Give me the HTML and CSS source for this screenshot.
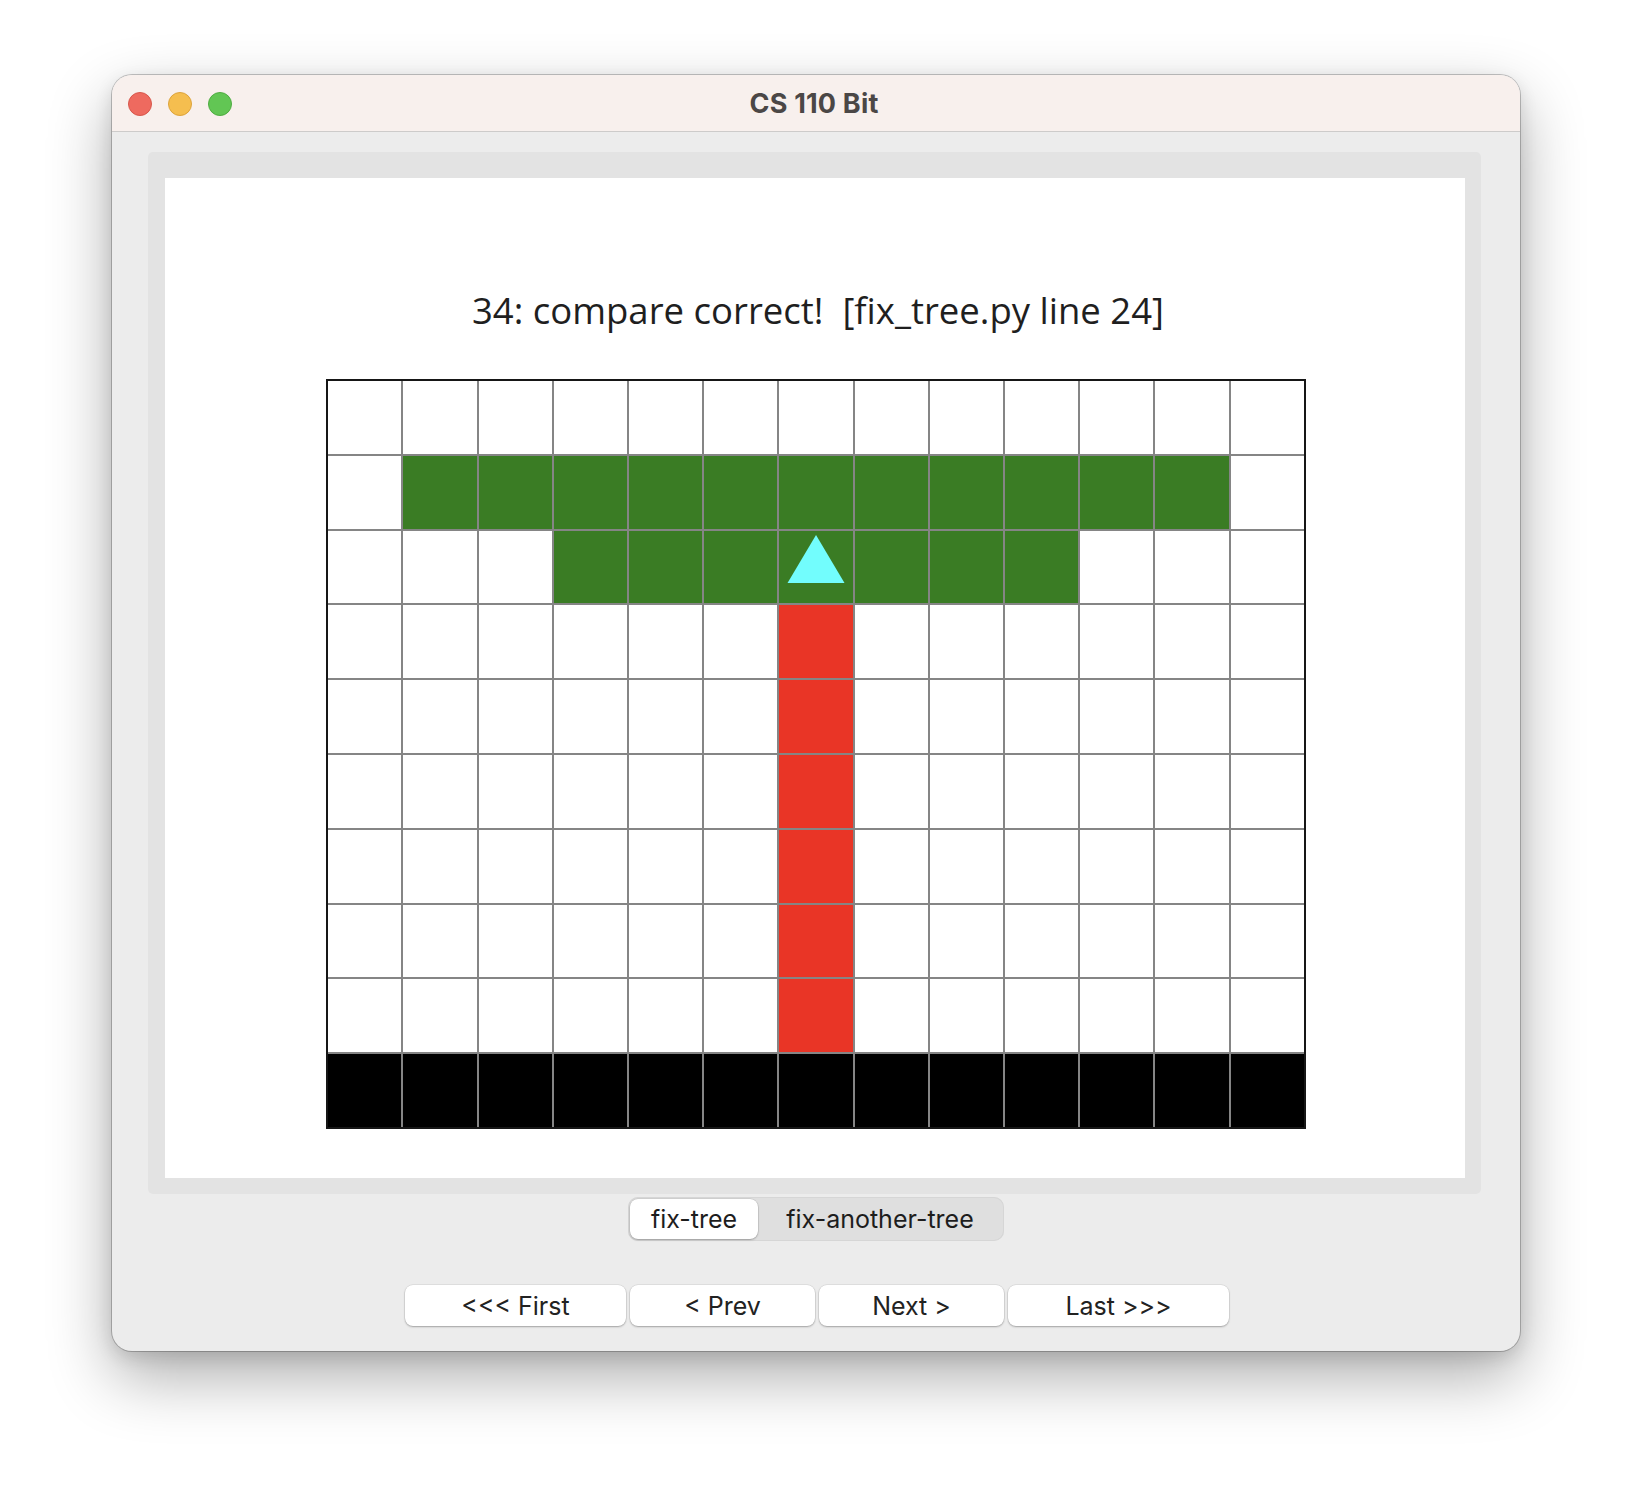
FILE: index.html
```html
<!DOCTYPE html>
<html>
<head>
<meta charset="utf-8">
<title>CS 110 Bit</title>
<link rel="stylesheet" href="styles.css">
</head>
<body>
<div class="window">
  <div class="titlebar">
    <div class="lights">
      <span class="light red"></span>
      <span class="light yellow"></span>
      <span class="light green"></span>
    </div>
    <div class="title">CS 110 Bit</div>
  </div>
  <div class="body">
    <div class="panel">
      <div class="canvas">
        <div class="caption">34: compare correct!&nbsp; [fix_tree.py line 24]</div>
        <div class="grid">
          <div class="c w"></div><div class="c w"></div><div class="c w"></div><div class="c w"></div><div class="c w"></div><div class="c w"></div><div class="c w"></div><div class="c w"></div><div class="c w"></div><div class="c w"></div><div class="c w"></div><div class="c w"></div><div class="c w"></div>
          <div class="c w"></div><div class="c g"></div><div class="c g"></div><div class="c g"></div><div class="c g"></div><div class="c g"></div><div class="c g"></div><div class="c g"></div><div class="c g"></div><div class="c g"></div><div class="c g"></div><div class="c g"></div><div class="c w"></div>
          <div class="c w"></div><div class="c w"></div><div class="c w"></div><div class="c g"></div><div class="c g"></div><div class="c g"></div><div class="c g"><svg class="bit" viewBox="0 0 73 73"><polygon points="37,4 65.5,52 8.5,52" fill="#72fdfd"/></svg></div><div class="c g"></div><div class="c g"></div><div class="c g"></div><div class="c w"></div><div class="c w"></div><div class="c w"></div>
          <div class="c w"></div><div class="c w"></div><div class="c w"></div><div class="c w"></div><div class="c w"></div><div class="c w"></div><div class="c r"></div><div class="c w"></div><div class="c w"></div><div class="c w"></div><div class="c w"></div><div class="c w"></div><div class="c w"></div>
          <div class="c w"></div><div class="c w"></div><div class="c w"></div><div class="c w"></div><div class="c w"></div><div class="c w"></div><div class="c r"></div><div class="c w"></div><div class="c w"></div><div class="c w"></div><div class="c w"></div><div class="c w"></div><div class="c w"></div>
          <div class="c w"></div><div class="c w"></div><div class="c w"></div><div class="c w"></div><div class="c w"></div><div class="c w"></div><div class="c r"></div><div class="c w"></div><div class="c w"></div><div class="c w"></div><div class="c w"></div><div class="c w"></div><div class="c w"></div>
          <div class="c w"></div><div class="c w"></div><div class="c w"></div><div class="c w"></div><div class="c w"></div><div class="c w"></div><div class="c r"></div><div class="c w"></div><div class="c w"></div><div class="c w"></div><div class="c w"></div><div class="c w"></div><div class="c w"></div>
          <div class="c w"></div><div class="c w"></div><div class="c w"></div><div class="c w"></div><div class="c w"></div><div class="c w"></div><div class="c r"></div><div class="c w"></div><div class="c w"></div><div class="c w"></div><div class="c w"></div><div class="c w"></div><div class="c w"></div>
          <div class="c w"></div><div class="c w"></div><div class="c w"></div><div class="c w"></div><div class="c w"></div><div class="c w"></div><div class="c r"></div><div class="c w"></div><div class="c w"></div><div class="c w"></div><div class="c w"></div><div class="c w"></div><div class="c w"></div>
          <div class="c k"></div><div class="c k"></div><div class="c k"></div><div class="c k"></div><div class="c k"></div><div class="c k"></div><div class="c k"></div><div class="c k"></div><div class="c k"></div><div class="c k"></div><div class="c k"></div><div class="c k"></div><div class="c k"></div>
        </div>
      </div>
    </div>
    <div class="segmented">
      <div class="seg selected">fix-tree</div>
      <div class="seg other">fix-another-tree</div>
    </div>
    <div class="buttons">
      <button class="btn wide">&lt;&lt;&lt; First</button>
      <button class="btn">&lt; Prev</button>
      <button class="btn">Next &gt;</button>
      <button class="btn wide">Last &gt;&gt;&gt;</button>
    </div>
  </div>
</div>
</body>
</html>
```

FILE: styles.css
```css
html, body {
  margin: 0;
  padding: 0;
  background: #ffffff;
}

body {
  width: 1632px;
  height: 1500px;
  overflow: hidden;
  font-family: "Inter", "Liberation Sans", sans-serif;
}

.window {
  margin-left: 112px;
  margin-top: 75px;
  width: 1408px;
  height: 1276px;
  border-radius: 20px;
  background: #ececec;
  box-shadow: 0 0 0 1px rgba(0, 0, 0, 0.22), 0 26px 64px rgba(0, 0, 0, 0.32), 0 6px 18px rgba(0, 0, 0, 0.12);
  overflow: hidden;
  display: flex;
  flex-direction: column;
}

.titlebar {
  height: 56px;
  flex: 0 0 auto;
  background: #f8f0ed;
  border-bottom: 1px solid #cdcbca;
  display: flex;
  align-items: center;
  justify-content: center;
  position: relative;
}

.lights {
  position: absolute;
  left: 16px;
  top: 17px;
  display: flex;
  gap: 16px;
}

.light {
  width: 22px;
  height: 22px;
  border-radius: 50%;
  display: block;
}

.light.red { background: #ee6a5f; border: 1px solid #d7574c; }
.light.yellow { background: #f5be4f; border: 1px solid #dca33c; }
.light.green { background: #62c654; border: 1px solid #4fac42; }

.title {
  font-family: "Inter", "Liberation Sans", sans-serif;
  font-weight: 700;
  font-size: 27px;
  color: #4b4746;
  letter-spacing: 0.2px;
  margin-left: -4px;
}

.body {
  flex: 1 1 auto;
  display: flex;
  flex-direction: column;
  align-items: center;
  padding-top: 20px;
}

.panel {
  width: 1333px;
  box-sizing: border-box;
  padding: 26px 16px 16px 17px;
  background: #e3e3e3;
  border-radius: 5px;
  margin-left: -3px;
}

.canvas {
  height: 1000px;
  background: #ffffff;
  display: flex;
  flex-direction: column;
  align-items: center;
  box-sizing: border-box;
  padding-top: 108px;
}

.caption {
  font-family: "Open Sans", "Noto Sans", sans-serif;
  font-size: 36.5px;
  line-height: 48px;
  color: #1f1f1f;
  white-space: pre;
  margin-left: 6px;
}

.grid {
  margin-top: 45px;
  display: grid;
  grid-template-columns: repeat(13, 73.2px);
  grid-template-rows: repeat(10, 72.8px);
  gap: 2px;
  background: #858585;
  border: 2px solid #161616;
  margin-left: 2px;
}

.c { position: relative; }
.c.w { background: #ffffff; }
.c.g { background: #3a7c24; }
.c.r { background: #e93526; }
.c.k { background: #000000; }

.bit {
  display: block;
  width: 73px;
  height: 73px;
}

.segmented {
  margin-top: 3px;
  display: flex;
  background: #dfdfdf;
  border-radius: 10px;
  box-shadow: inset 0 0 0 1px #d6d6d6;
  padding: 2px;
  margin-left: 0px;
}

.seg {
  height: 40px;
  display: flex;
  align-items: center;
  justify-content: center;
  font-family: "Inter", "Liberation Sans", sans-serif;
  font-size: 25px;
  color: #1d1d1d;
  border-radius: 8px;
}

.seg.selected {
  width: 128px;
  background: #ffffff;
  box-shadow: 0 1px 2px rgba(0, 0, 0, 0.25), 0 0 0 0.5px rgba(0, 0, 0, 0.12);
}

.seg.other {
  width: 244px;
}

.buttons {
  margin-top: 44px;
  display: flex;
  gap: 4px;
  margin-left: 2px;
}

.btn {
  height: 41px;
  width: 185px;
  border: none;
  border-radius: 8px;
  background: #ffffff;
  box-shadow: 0 1px 2px rgba(0, 0, 0, 0.28), 0 0 0 0.5px rgba(0, 0, 0, 0.1);
  font-family: "Inter", "Liberation Sans", sans-serif;
  font-size: 25px;
  color: #222222;
  padding: 0;
}

.btn.wide {
  width: 221px;
}
```
